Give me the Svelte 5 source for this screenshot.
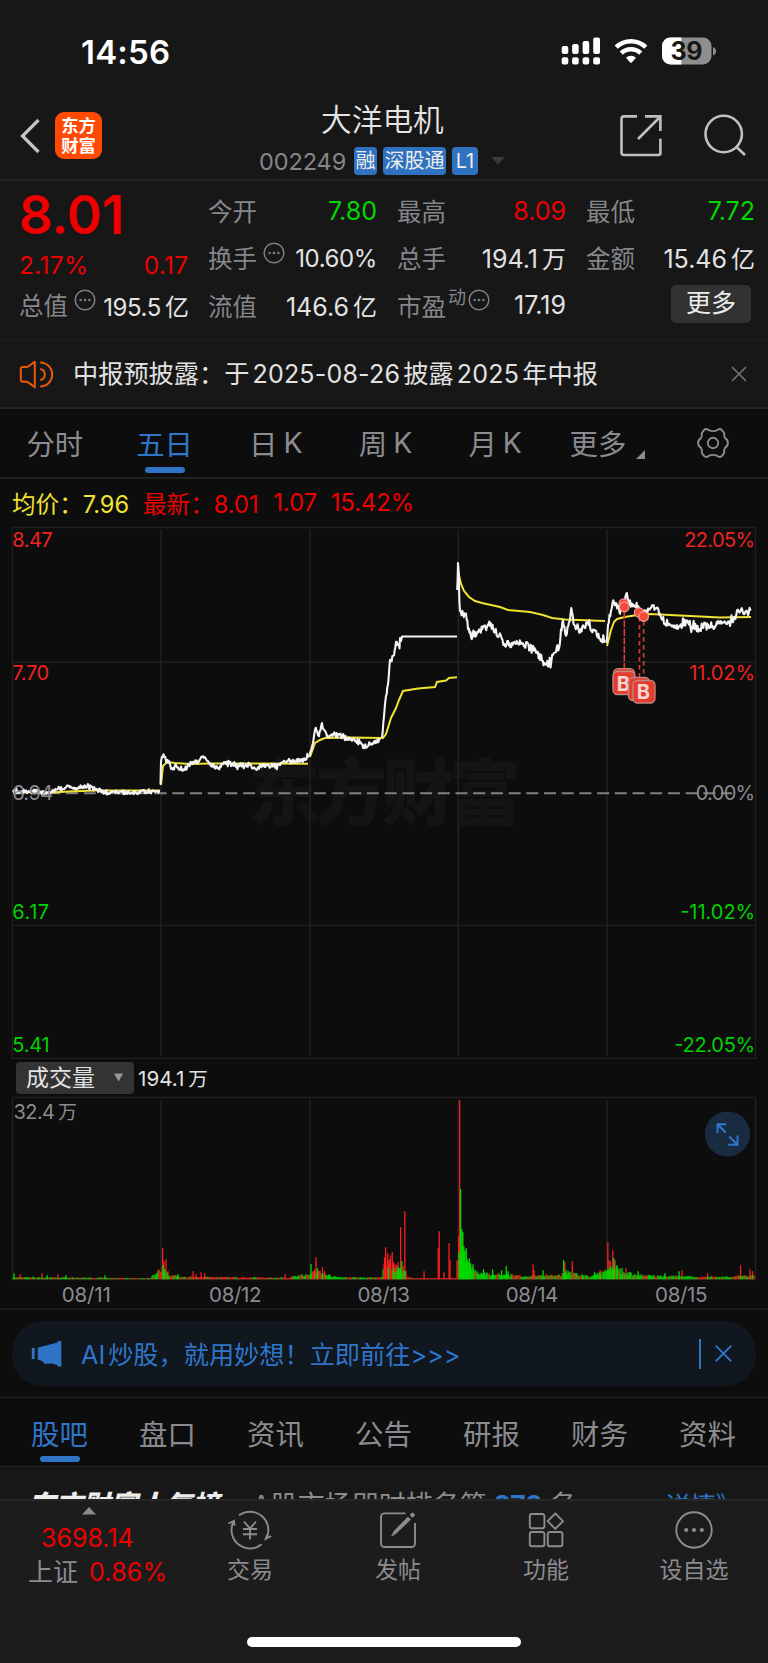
<script>
  const quoteColumns = [
    [
      { label: '今开', value: '7.80', tone: 'green' },
      { label: '换手', info: true, value: '10.60%', tone: 'small' },
      { label: '流值', value: '146.6', unit: '亿' }
    ],
    [
      { label: '最高', value: '8.09', tone: 'red' },
      { label: '总手', value: '194.1', unit: '万' },
      { label: '市盈', sup: '动', info: true, value: '17.19' }
    ],
    [
      { label: '最低', value: '7.72', tone: 'green' },
      { label: '金额', value: '15.46', unit: '亿' }
    ]
  ];
  const sections = ['股吧', '盘口', '资讯', '公告', '研报', '财务', '资料'];

  // Seeded generator, so that the intraday jitter is stable between renders
  function seeded(seed) {
    let s = seed;
    return () => {
      s = (s * 1664525 + 1013904223) % 4294967296;
      return s / 4294967296;
    };
  }

  function jitterLine(points, amp, seed) {
    const rnd = seeded(seed);
    const out = [];
    for (let i = 0; i < points.length - 1; i++) {
      const [x0, y0] = points[i];
      const [x1, y1] = points[i + 1];
      const n = Math.max(1, Math.round((x1 - x0) / 0.8));
      for (let k = 0; k < n; k++) {
        const t = k / n;
        const r = rnd() - 0.5;
        const a = k === 0 ? 0.5 : 1;
        const spike = rnd() > 0.88 ? 1.9 : 1;
        out.push([x0 + (x1 - x0) * t, y0 + (y1 - y0) * t + r * 2 * amp * a * spike]);
      }
    }
    out.push(points[points.length - 1]);
    return out.map(([x, y]) => `${x.toFixed(1)},${y.toFixed(1)}`).join(' ');
  }
  const line = (pts) => pts.map((p) => p.join(',')).join(' ');

  const price = [
    jitterLine([[13, 791], [22, 792], [30, 792], [38, 791], [45, 793], [52, 792], [57, 789], [65, 787], [75, 788], [84, 787], [95, 789], [103, 792], [112, 792], [121, 792], [130, 793], [140, 792], [152, 792], [160, 791]], 2, 7),
    jitterLine([[160.5, 785], [161, 761], [163.5, 755], [166, 762], [169, 762], [171, 768], [178, 767], [184, 770], [188, 766], [193, 762], [199, 761], [203, 757], [208, 761], [214, 767], [220, 766], [227, 762], [235, 766], [243, 764], [255, 768], [263, 766], [280, 765], [285, 761], [296, 761], [302, 760], [308, 758]], 2.4, 19),
    jitterLine([[309, 757], [312, 747], [315, 729], [319, 735], [322, 724], [327, 738], [335, 735], [341, 736], [348, 739], [356, 740], [363, 747], [370, 744], [380, 740]], 2.4, 33),
    jitterLine([[382, 738], [384, 716], [386, 696], [388, 685], [390, 660], [394, 656], [396, 642], [398, 644], [399.5, 648], [400, 638]], 2, 3) + ' 401,641 402,636.5 457,636.5',
    '457.4,590 458,563 458.6,570 459.4,602 ' + jitterLine([[460, 612], [463, 615], [466, 614], [468, 628], [471, 636], [475, 633], [480, 631], [487, 628], [490, 624], [495, 631], [500, 635], [505, 645], [515, 643], [523, 642], [530, 648], [537, 652], [542, 660], [548, 665], [553, 655], [559, 647], [561, 630], [563, 620], [566, 634], [569, 622], [572, 611], [575, 625], [580, 631], [587, 624], [593, 630], [600, 637], [605, 640]], 4, 11),
    jitterLine([[606.5, 645], [608, 624], [611, 609], [614, 602], [618, 606], [620, 614], [622, 603], [626, 595], [630, 603], [635, 607], [640, 611], [645, 612], [652, 607], [660, 612], [664, 622], [670, 624], [680, 629], [686, 621], [692, 626], [700, 629], [705, 623], [712, 626], [720, 624], [727, 625], [733, 621], [737, 612], [741, 609], [746, 612], [748, 614], [751, 609]], 3.8, 29)
  ];
  const average = [
    line([[13, 792], [50, 792.4], [70, 791.4], [95, 790.6], [130, 790.6], [160, 790.6]]),
    line([[161, 785], [163, 766], [167, 762], [175, 763], [190, 764], [210, 763.5], [308, 763.7]]),
    line([[310, 757], [315, 743], [320, 740], [325, 738], [350, 737.5], [383, 738], [386, 734], [391, 718], [396, 708], [399, 700], [403, 691], [418, 688.5], [435, 687], [437, 682], [446, 680.5], [449, 678], [457, 677.3]]),
    line([[457.4, 590], [458.5, 573], [461, 584], [464, 591], [469, 597], [475, 601], [482, 603], [500, 607], [508, 610], [530, 612], [543, 615], [552, 618], [565, 619.5], [605, 621]]),
    line([[607, 646], [611, 630], [614, 622], [617, 619], [625, 617], [637, 615], [650, 614], [680, 615.5], [720, 617.5], [751, 617]])
  ];

  // Tallest volume columns: x, height, r(ed) or g(reen)
  const peaks = [
    [14, 6, 'g'], [20, 5, 'r'], [42, 6, 'r'], [47, 4, 'g'], [58, 5, 'r'], [66, 4, 'g'], [105, 4, 'g'],
    [162.6, 31, 'r'], [163.9, 18, 'r'], [166, 20, 'r'], [163.2, 14, 'g'], [165, 10, 'g'], [168, 8, 'r'], [167, 7, 'g'],
    [178, 5, 'g'], [193, 8, 'r'], [196, 5, 'r'], [201, 7, 'r'], [204.5, 6, 'r'], [285, 5, 'r'], [292, 3, 'r'],
    [311, 15, 'g'], [313, 8, 'r'], [314.5, 10, 'r'], [316, 22, 'r'], [317.3, 11, 'g'], [322.5, 12, 'r'], [324.5, 8, 'r'], [329, 5, 'g'],
    [385.6, 32, 'r'], [384.5, 22, 'r'], [387.6, 26, 'r'], [389, 20, 'r'], [390.5, 24, 'r'], [392.2, 27, 'r'], [393.5, 17, 'r'], [395, 15, 'r'], [396.4, 14, 'r'], [398, 17, 'r'], [399, 10, 'r'],
    [388.4, 11, 'g'], [395, 7, 'g'], [398.6, 12, 'g'], [400.6, 52, 'r'], [401.8, 18, 'g'], [403.2, 13, 'r'], [404.8, 68, 'r'], [405.8, 8, 'r'],
    [424, 8, 'r'], [438.2, 31, 'r'], [439.2, 48, 'r'], [444, 7, 'r'], [449, 36, 'r'], [450, 19, 'r'],
    [458.7, 43, 'r'], [459.6, 179, 'r'], [460.6, 90, 'g'], [461.8, 50, 'g'], [462.8, 47, 'g'], [463.8, 33, 'g'], [465, 28, 'g'], [466.2, 31, 'g'], [467.4, 18, 'g'], [469.2, 21, 'g'], [470.6, 16, 'g'], [473, 15, 'g'], [467.8, 16, 'r'],
    [483.5, 10, 'g'], [492.5, 10, 'g'], [501.5, 9, 'g'], [506.2, 13, 'g'], [508, 8, 'g'], [533, 15, 'r'], [534, 9, 'r'], [543, 9, 'g'],
    [563.6, 19, 'g'], [564.8, 17, 'r'], [566, 9, 'g'], [572.3, 18, 'r'], [594.5, 7, 'g'], [600, 9, 'r'],
    [607.8, 37, 'r'], [609, 19, 'r'], [610.4, 18, 'r'], [612.7, 29, 'r'], [613.8, 21, 'g'], [615, 19, 'r'], [617, 14, 'g'], [622, 11, 'g'], [626, 11, 'r'],
    [638, 8, 'g'], [665, 6, 'g'], [679, 8, 'g'], [682, 9, 'r'], [707.5, 6, 'r'], [740.5, 14, 'r'], [750, 10, 'r'], [752.5, 8, 'r']
  ];
  const envelope = [
    [13, 2.2, 0.6], [30, 2.4, 0.6], [150, 1.2, 0.3], [162, 12, 0.4], [168, 4, 0.5], [185, 3, 0.5], [200, 2.5, 0.3], [290, 1.8, 0.5], [310, 7, 0.4], [318, 8, 0.7], [332, 3.4, 0.8], [345, 2, 0.6], [382, 2, 0.3],
    [384, 18, 0.1], [396, 12, 0.35], [405, 9, 0.4], [407, 3, 0.1], [413, 1, 0], [456, 1.4, 0], [459, 60, 0.9], [461, 45, 1], [466, 22, 1], [474, 10, 0.9], [484, 7, 0.7], [510, 5, 0.6], [525, 3, 0.6], [545, 5, 0.5], [560, 4.5, 0.5], [565, 10, 0.7], [580, 5, 0.7], [590, 3, 0.8], [606, 10, 0.8], [612, 15, 0.7], [620, 10, 0.9], [635, 5, 0.7], [660, 3.5, 0.8], [700, 3, 0.7], [730, 2.6, 0.4], [742, 4, 0.5], [755, 5, 0.4]
  ];
  function volumeBars() {
    const rnd = seeded(91);
    const bars = [];
    for (let i = 0; i < envelope.length - 1; i++) {
      const [x0, h0, g0] = envelope[i];
      const [x1, h1] = envelope[i + 1];
      for (let x = x0; x < x1; x += 1) {
        const h = h0 + ((h1 - h0) * (x - x0)) / (x1 - x0);
        bars.push([x, Math.max(0.9, Math.min(h, 30) * (0.5 + 0.6 * rnd())), rnd() < g0 ? 'g' : 'r']);
      }
    }
    return [...peaks.filter((p) => p[2] === 'r'), ...bars, ...peaks.filter((p) => p[2] === 'g')];
  }
  const bars = volumeBars();
  const dayLines = [161, 310, 458.3, 607];
  const axis = [
    [540.3, '8.47', 40.5, '22.05%', 71, '#ee2320'],
    [673, '7.70', 37, '11.02%', 66, '#ee2320'],
    [793, '6.94', 41, '0.00%', 59.5, '#8b8b90'],
    [912.3, '6.17', 37, '-11.02%', 75, '#00d100'],
    [1044.6, '5.41', 37.5, '-22.05%', 81, '#00d100']
  ];
  const dates = [['08/11', 86.3, 49], ['08/12', 235.3, 52.5], ['08/13', 383.7, 52.5], ['08/14', 532, 52.5], ['08/15', 681.3, 52.5]];
</script>

{#snippet dots()}
  <svg class="dots" width="22" height="22" viewBox="0 0 22 22">
    <circle cx="11" cy="11" r="9.8" fill="none" stroke="#7d7d82" stroke-width="1.5" />
    <circle cx="6.6" cy="11" r="1.3" fill="#7d7d82" />
    <circle cx="11" cy="11" r="1.3" fill="#7d7d82" />
    <circle cx="15.4" cy="11" r="1.3" fill="#7d7d82" />
  </svg>
{/snippet}

<main>
  <header>
    <div class="status">
      <span class="clock">14:56</span>
      <svg width="160" height="30" viewBox="560 36 160 30">
        <g fill="#fff">
          <rect x="561.7" y="46" width="6.6" height="8" rx="2" /><rect x="572.1" y="44" width="6.6" height="10" rx="2" />
          <rect x="582.6" y="41" width="6.6" height="13" rx="2" /><rect x="593.2" y="37.6" width="6.8" height="16.4" rx="2" />
          <rect x="561.7" y="57.2" width="6.6" height="7.4" rx="2" /><rect x="572.1" y="57.2" width="6.6" height="7.4" rx="2" />
          <rect x="582.6" y="57.2" width="6.6" height="7.4" rx="2" /><rect x="593.2" y="57.2" width="6.8" height="7.4" rx="2" />
          <path d="M626 57.8 a7.2 7.2 0 0 1 10 0 L632 62.3 a1.4 1.4 0 0 1 -2 0z" />
        </g>
        <g fill="none" stroke="#fff" stroke-width="4.6">
          <path d="M616.2 47.2 a21.4 21.4 0 0 1 29.6 0" />
          <path d="M621.3 53.2 a13.8 13.8 0 0 1 19.4 0" />
        </g>
        <clipPath id="cell"><rect x="662" y="37.5" width="49.5" height="27" rx="8.5" /></clipPath>
        <g clip-path="url(#cell)"><rect x="662" y="37" width="50" height="28" fill="#8e8e8e" /><rect x="662" y="37" width="19.3" height="28" fill="#fff" /></g>
        <path d="M713 47 q3 1.2 3 4.2 t-3 4.2z" fill="#8e8e8e" />
        <text x="670.5" y="60" font-size="25" font-weight="700" textLength="32" fill="#171717">39</text>
      </svg>
    </div>
    <div class="nav">
      <svg class="back" width="24" height="40" viewBox="0 0 24 40"><path d="M20.5 4 4.5 20 20.5 36" fill="none" stroke="#c4c4c4" stroke-width="3.2" /></svg>
      <div class="logo"><span>东方</span><span>财富</span></div>
      <div class="title">
        <h1>大洋电机</h1>
        <div class="sub">
          <span class="code">002249</span><b class="t1">融</b><b class="t3">深股通</b><b class="t2">L1</b>
          <svg width="14" height="8" viewBox="0 0 14 8"><path d="M0 0h14L7 7.5z" fill="#3b3b3b" /></svg>
        </div>
      </div>
      <svg class="acts" width="130" height="48" viewBox="618 112 130 48" fill="none" stroke="#c0c0c0" stroke-width="2.6">
        <path d="M637 116.4h-13a2.5 2.5 0 0 0-2.5 2.5v33.6a2.5 2.5 0 0 0 2.5 2.5h34.4a2 2 0 0 0 2-2v-14.3M645 116.4h15.4V131M660 117 638 139" />
        <circle cx="723.7" cy="134" r="18.2" /><path d="M736 146.5 745 155" />
      </svg>
    </div>
  </header>

  <section class="quote">
    <div class="main-col">
      <div class="last">8.01</div>
      <div class="row red"><span>2.17%</span><span>0.17</span></div>
      <div class="row"><span class="lab">总值</span>{@render dots()}<span class="val small">195.5<i>亿</i></span></div>
    </div>
    {#each quoteColumns as col, c}
      <div class="col">
        {#each col as item}
          <div class="row">
            <span class="lab">{item.label}</span>
            {#if item.sup}<sup>{item.sup}</sup>{/if}
            {#if item.info}{@render dots()}{/if}
            <span class="val {item.tone ?? ''}">{item.value}{#if item.unit}<i>{item.unit}</i>{/if}</span>
          </div>
        {/each}
        {#if c === 2}<div class="row"><button class="more">更多</button></div>{/if}
      </div>
    {/each}
  </section>

  <section class="notice">
    <svg width="34" height="30" viewBox="19 358 34 30" fill="none" stroke="#e8590c" stroke-width="2">
      <path d="M34.8 360.8v25.4l-6.2-4.6q-1-.8-2.300-.8h-3.300q-2.200 0-2.200-2.200v-10.400q0-2.200 2.200-2.200h3.300q1.300 0 2.300-.8z" stroke-linejoin="round" />
      <path d="M40.200 361.500a12 12 0 0 1 0 24M40.200 368a5.600 5.600 0 0 1 0 11" />
    </svg>
    <p>中报预披露：于<i>2025-08-26</i>披露<i>2025</i>年中报</p>
    <svg width="16" height="16" viewBox="0 0 16 16"><path d="M1 1 15 15M15 1 1 15" stroke="#77777b" stroke-width="1.5" /></svg>
  </section>

  <nav class="periods">
    <span>分时</span><span class="on">五日</span><span class="k">日<i>K</i></span><span class="k">周<i>K</i></span><span class="k">月<i>K</i></span>
    <span class="drop">更多<svg width="9" height="9" viewBox="0 0 9 9"><path d="M9 0v9H0z" fill="#8b8b90" /></svg></span>
    <span>
      <svg width="34" height="32" viewBox="-17 -16 34 32" fill="none" stroke="#8b8b90" stroke-width="1.9">
        <path stroke-linejoin="round" d="M-4.800-13.200Q-7-15-9-12.900L-11.300-9.800Q-10.700-6.800-12-4.800-14.900-3.200-14.900 0T-12 4.800Q-10.700 6.800-11.300 9.800L-9 12.900Q-7 15-4.800 13.200-2.200 11.900 0 11.900T4.800 13.200Q7 15 9 12.900L11.300 9.800Q10.700 6.800 12 4.800 14.900 3.200 14.900 0T12-4.800Q10.700-6.800 11.300-9.800L9-12.900Q7-15 4.800-13.200 2.200-11.900 0-11.900T-4.800-13.200z" />
        <circle r="5.200" />
      </svg>
    </span>
  </nav>

  <div class="legend"><span class="avg">均价：<i>7.96</i></span><span class="now">最新：<i>8.01</i></span><em class="chg">1.07</em><em>15.42%</em></div>

  <svg class="chart" width="768" height="532" viewBox="0 527 768 532">
    <text x="248" y="819" font-size="72" font-weight="900" textLength="273" fill="#141414">东方财富</text>
    <g fill="none" stroke="#202020" stroke-width="1.6">
      <path d="M12.500 1058.400V527.500H755.500V1058.400zM12.500 662H755.500M12.500 925.300H755.500" stroke-width="1.300" />
      {#each dayLines as x}<path d="M{x} 530V1056" />{/each}
    </g>
    <path d="M13 793.300H732" stroke="#808085" stroke-width="2" stroke-dasharray="12 5.700" />
    {#each average as pts}<polyline points={pts} fill="none" stroke="#f0e232" stroke-width="2" />{/each}
    {#each price as pts}<polyline points={pts} fill="none" stroke="#f4f4f4" stroke-width="2.100" stroke-linejoin="round" />{/each}
    {#each axis as [y, left, lw, right, rw, color]}
      <text x="12.200" y={y + 7} font-size="20" textLength={lw} fill={color}>{left}</text>
      <text x={755.200 - rw} y={y + 7} font-size="20" textLength={rw} fill={color}>{right}</text>
    {/each}
    <g stroke="#e23b2e" stroke-width="1.600" fill="none">
      <path d="M624.300 612V669" stroke-dasharray="7 1.500" />
      <path d="M639.500 617V678M643.700 621V681" stroke-dasharray="4.500 3.500" />
    </g>
    <g fill="#f5493a" stroke="#ef9d92" stroke-width="1.200">
      <circle cx="623.700" cy="603.500" r="4.600" /><circle cx="624.300" cy="607" r="4.800" />
      <circle cx="639" cy="612.500" r="4.600" /><circle cx="643.700" cy="616.500" r="4.800" />
    </g>
    <g fill="#e63c2c" stroke="#bd8983" stroke-width="1.300">
      <rect x="613.500" y="668.700" width="21" height="23" rx="4.500" /><rect x="613" y="671.500" width="22" height="23" rx="4.500" />
    </g>
    <text x="616.700" y="690.500" font-size="20" font-weight="700" fill="#f6d6d2">B</text>
    <g fill="#e63c2c" stroke="#bd8983" stroke-width="1.300">
      <rect x="628.500" y="677.500" width="21" height="23" rx="4.500" /><rect x="633" y="680.500" width="22" height="22.500" rx="4.500" />
    </g>
    <text x="636.700" y="699.300" font-size="20" font-weight="700" fill="#f6d6d2">B</text>
  </svg>

  <div class="volhead">
    <div class="picker">成交量<svg width="9" height="9" viewBox="0 0 9 9"><path d="M0 .5h9L4.500 8.500z" fill="#98989c" /></svg></div>
    <span>194.1<i>万</i></span>
  </div>

  <svg class="volume" width="768" height="212" viewBox="0 1096 768 212">
    <g fill="none" stroke="#222" stroke-width="1.500">
      <path d="M12.500 1279.700V1097.300H755.500V1279.700z" stroke-width="1.300" />
      {#each dayLines as x}<path d="M{x} 1100V1279" />{/each}
    </g>
    {#each bars as [x, h, c]}<rect x={x - 0.6} y={1279.200 - h} width="1.300" height={h} fill={c === 'g' ? '#00dc00' : '#f5201e'} />{/each}
    <text x="13.500" y="1119.300" font-size="20" textLength="41.500" fill="#8b8b90">32.4</text><text x="58" y="1119.300" font-size="19" fill="#8b8b90">万</text>
    {#each dates as [d, x, w]}<text x={x - w / 2} y="1302" font-size="20.500" textLength={w} fill="#8b8b90">{d}</text>{/each}
    <circle cx="727.500" cy="1134" r="22.600" fill="#192b41" />
    <path d="M726 1124.300H717.500V1133M717.500 1124.300 725.600 1132.500M728.300 1144.800H737.500V1135.500M737.500 1144.800 729.300 1136.600" fill="none" stroke="#2f77cd" stroke-width="2" />
  </svg>

  <div class="promo-wrap">
    <div class="promo">
      <svg width="31" height="27" viewBox="31 1340 31 27" fill="#2f74c6"><path d="M31.800 1348h2.900v11h-2.900zM37.700 1347.800 57.600 1342.500V1341h3.700v25.600h-3.700v-1.500l-7-1.800q-1.400 1.600-3.200 0-1.500 1.500-2.800.3l-2.600-2.700-4.300-1.300z" /></svg>
      <p><i>AI</i>炒股，就用妙想！立即前往&gt;&gt;&gt;</p>
      <hr />
      <svg width="17" height="17" viewBox="0 0 17 17"><path d="M.7.7 16.300 16.300M16.300.7.7 16.300" stroke="#2f77cd" stroke-width="1.900" /></svg>
    </div>
  </div>

  <nav class="sections">{#each sections as s, i}<span class:on={i === 0}>{s}</span>{/each}</nav>

  <section class="peek">
    <strong>东方财富人气榜</strong><span class="rank">A股市场即时排名第<b>270</b>名</span><span class="detail">详情》</span>
  </section>

  <footer>
    <div class="bar">
      <div class="index">
        <svg width="14" height="8" viewBox="0 0 14 8"><path d="M0 7.500h14L7 0z" fill="#8b8b90" /></svg>
        <div class="pts">3698.14</div>
        <div class="pct">上证<em>0.86%</em></div>
      </div>
      <div class="act">
        <svg width="44" height="40" viewBox="-22 -20 44 40" fill="none" stroke="#8b8b90" stroke-width="1.900">
          <path d="M-11-14.700A18.400 18.400 0 0 1 16.800 7.500M11.600 14.300A18.400 18.400 0 0 1-16.700-7.800M-21.500-6.500-16-9-15.500-4.500M21.200 6 15.800 8.800 17.500 4" />
          <path d="M-6-8.500 0-1.500 6-8.500M0-1.500V9.500M-7-1H7M-7 4.200H7" />
        </svg><span>交易</span>
      </div>
      <div class="act">
        <svg width="44" height="40" viewBox="-22 -20 44 40" fill="none" stroke="#8b8b90" stroke-width="1.900">
          <path d="M7.500-16.600H-13.500a3.500 3.500 0 0 0-3.500 3.500V13.500A3.500 3.500 0 0 0-13.500 17H13.500A3.500 3.500 0 0 0 17 13.500V-7" />
          <path d="M-6.300 6-3.800 1 10-13 12.500-10.500-1.500 3zM12-15 14.500-17.300 16.800-15 14.500-12.500z" fill="#8b8b90" stroke-width=".8" />
        </svg><span>发帖</span>
      </div>
      <div class="act">
        <svg width="44" height="40" viewBox="-22 -20 44 40" fill="none" stroke="#8b8b90" stroke-width="1.900" stroke-linejoin="round">
          <rect x="-16.200" y="-16" width="14.600" height="14.300" rx="2" /><rect x="-16.200" y="2" width="14.600" height="14.300" rx="2" />
          <rect x="1.800" y="2" width="14.600" height="14.300" rx="2" /><path d="M9.300-16.500 17-8.800 9.300-1.100 1.600-8.800z" />
        </svg><span>功能</span>
      </div>
      <div class="act">
        <svg width="44" height="40" viewBox="-22 -20 44 40"><circle r="17.700" fill="none" stroke="#8b8b90" stroke-width="1.900" /><g fill="#8b8b90"><circle cx="-7.800" r="2.100" /><circle r="2.100" /><circle cx="7.800" r="2.100" /></g></svg><span>设自选</span>
      </div>
    </div>
    <div class="home"></div>
  </footer>
</main>

<style>
  :global(body) { margin: 0; background: #0d0d0d; }
  main { width: 768px; height: 1663px; overflow: hidden; display: flex; flex-direction: column; background: #0d0d0d; color: #e2e2e2; font-family: Inter, "Noto Sans CJK SC", sans-serif; }
  main :global(*) { box-sizing: border-box; }
  main > :global(*) { flex: none; }
  svg { display: block; flex: none; overflow: visible; }
  i, em { font-style: normal; }
  h1, p, hr { margin: 0; }

  header { height: 181px; background: #171717; border-bottom: 2px solid #252525; }
  .status { height: 104px; display: flex; align-items: flex-start; justify-content: space-between; padding: 36px 48px 0 81px; }
  .clock { font-size: 33px; line-height: 32px; font-weight: 600; color: #fff; letter-spacing: .2px; }
  .nav { display: flex; height: 75px; }
  .back { margin: 12px 0 0 18px; }
  .logo { width: 47px; height: 47px; margin: 8px 0 0 13px; border-radius: 9px; background: #ff4a03; color: #fff; display: flex; flex-direction: column; align-items: center; justify-content: center; font-size: 17.300px; line-height: 19.300px; font-weight: 700; }
  .title { width: 250px; margin-left: 157px; }
  h1 { font-size: 30.700px; font-weight: 350; line-height: 32px; padding-left: 62px; color: #e4e4e4; }
  .sub { display: flex; height: 28px; align-items: center; margin-top: 11px; white-space: nowrap; }
  .code { width: 95px; font-size: 23.500px; letter-spacing: -.1px; color: #85858a; }
  .sub b { height: 28px; line-height: 28px; text-align: center; background: #2f72c0; border-radius: 4px; font-size: 20px; font-weight: 400; color: #ececec; margin-right: 6px; flex: none; }
  .t1 { width: 23px; } .t3 { width: 63px; } .t2 { width: 26px; }
  .sub svg { margin-left: 7px; }
  .acts { margin: 8px 0 0 109px; }

  .quote { height: 159px; background: #171717; border-bottom: 1px solid #212121; display: flex; padding: 6px 0 0 19px; }
  .main-col { flex: none; width: 169.500px; margin-right: 19.500px; }
  .col { flex: none; width: 169px; margin-right: 20px; }
  .col:last-child { margin-right: 0; }
  .last { height: 55px; line-height: 56px; font-size: 53.500px; font-weight: 600; color: #ee0000; letter-spacing: -.3px; }
  .row { height: 47.300px; display: flex; align-items: center; font-size: 24.500px; white-space: nowrap; }
  .main-col .row:nth-child(2) { height: 39px; padding-top: 7px; letter-spacing: .3px; }
  .row.red { justify-content: space-between; }
  .lab { color: #85858a; }
  .val { margin-left: auto; font-size: 25px; }
  .val i { margin-left: 4px; font-size: 24px; }
  .val.small { font-size: 24px; letter-spacing: -.4px; padding-top: 2px; }
  .dots { margin: -10px 0 0 6px; }
  sup { font-size: 18px; line-height: 18px; color: #85858a; margin: -14px -4px 0 2px; }
  .red { color: #ee0000; } .green { color: #00d800; }
  .more { margin: -3px 4px 0 auto; width: 80px; height: 38px; padding: 0; border: 0; border-radius: 5px; background: #323232; color: #ededed; font: 25px/37px Inter, "Noto Sans CJK SC", sans-serif; }

  .notice { height: 69px; background: #171717; border-bottom: 2px solid #242424; display: flex; align-items: center; padding: 0 21px 0 19px; }
  .notice p { margin: 0 auto 0 20px; font-size: 25.200px; line-height: 34px; white-space: nowrap; }
  .notice i { margin: 0 3.200px; font-size: 25px; letter-spacing: .2px; }

  .periods { height: 70px; border-bottom: 2px solid #202020; display: grid; grid-template-columns: repeat(7, 1fr); }
  .periods span, .sections span { position: relative; display: flex; align-items: center; justify-content: center; font-size: 28.400px; color: #8b8b90; }
  .periods span { padding-bottom: 1px; }
  .periods i { margin-left: 6px; }
  .periods .k { padding-left: 3px; }
  .periods .on, .sections .on { color: #2f76ca; }
  .on::after { content: ""; position: absolute; bottom: 4px; left: 50%; width: 40px; height: 6px; border-radius: 3px; margin-left: -20px; background: #2f74c6; }
  .periods .drop { padding-left: 8px; }
  .drop svg { margin: 23px 0 0 10px; }

  .legend { height: 48px; display: flex; align-items: center; padding: 0 0 1px 12px; font-size: 23.600px; color: #ee0000; white-space: nowrap; }
  .avg { color: #f0e232; width: 131px; } .now { width: 130.500px; } .chg { width: 57.500px; }

  .volhead { height: 37px; display: flex; align-items: center; padding-left: 16px; font-size: 20.600px; }
  .volhead span i { margin-left: 4px; font-size: 19.500px; }
  .picker { width: 118px; height: 32px; margin-right: 4px; padding: 0 11px 0 10px; background: #333; border-radius: 4px; display: flex; align-items: center; justify-content: space-between; font-size: 23px; line-height: 30px; }

  .promo-wrap { height: 90px; border-top: 2px solid #191919; border-bottom: 1px solid #222; padding: 11px 12px 0; }
  .promo { height: 65px; border-radius: 31px; background: #10171e; color: #2f76ca; display: flex; align-items: center; padding: 0 24px 0 19px; }
  .promo p { margin: -2px auto 0 19px; font-size: 25.200px; white-space: nowrap; }
  .promo p i { margin-right: 3px; }
  .promo hr { width: 2px; height: 30px; border: 0; background: #2f74c6; margin-right: 14px; }

  .sections { height: 69px; padding: 0 6px; display: grid; grid-template-columns: repeat(7, 1fr); border-bottom: 1px solid #232323; }
  .sections span { padding-right: 1px; }
  .peek { height: 32px; background: #171717; overflow: hidden; display: flex; align-items: flex-start; padding: 20px 0 0 28px; font-size: 27px; line-height: 37px; white-space: nowrap; color: #8b8b90; }
  .peek strong { width: 224px; font-size: 27.300px; font-weight: 900; font-style: italic; color: #ececec; }
  .rank b { color: #2f76ca; font-size: 27px; margin: 0 7px; letter-spacing: -.6px; }
  .detail { margin-left: auto; width: 103px; font-size: 25.500px; color: #2f76ca; }

  footer { height: 164px; background: #1c1c1c; border-top: 2px solid #252525; }
  .bar { display: flex; height: 96px; }
  .index { width: 176px; color: #ee0000; padding-top: 6px; }
  .index svg { margin-left: 82px; }
  .pts { margin: 7px 0 0 41px; font-size: 25px; line-height: 32px; }
  .pct { margin: 2px 0 0 28px; font-size: 25px; line-height: 32px; color: #8b8b90; white-space: nowrap; }
  .pct em { margin-left: 11px; color: #ee0000; letter-spacing: .2px; }
  .act { flex: 1; display: flex; flex-direction: column; align-items: center; padding-top: 9px; color: #8b8b90; font-size: 23px; line-height: 32px; }
  .act span { margin-top: 4px; }
  .home { width: 274px; height: 10px; border-radius: 5px; background: #fff; margin: 40px auto 0; }
</style>
